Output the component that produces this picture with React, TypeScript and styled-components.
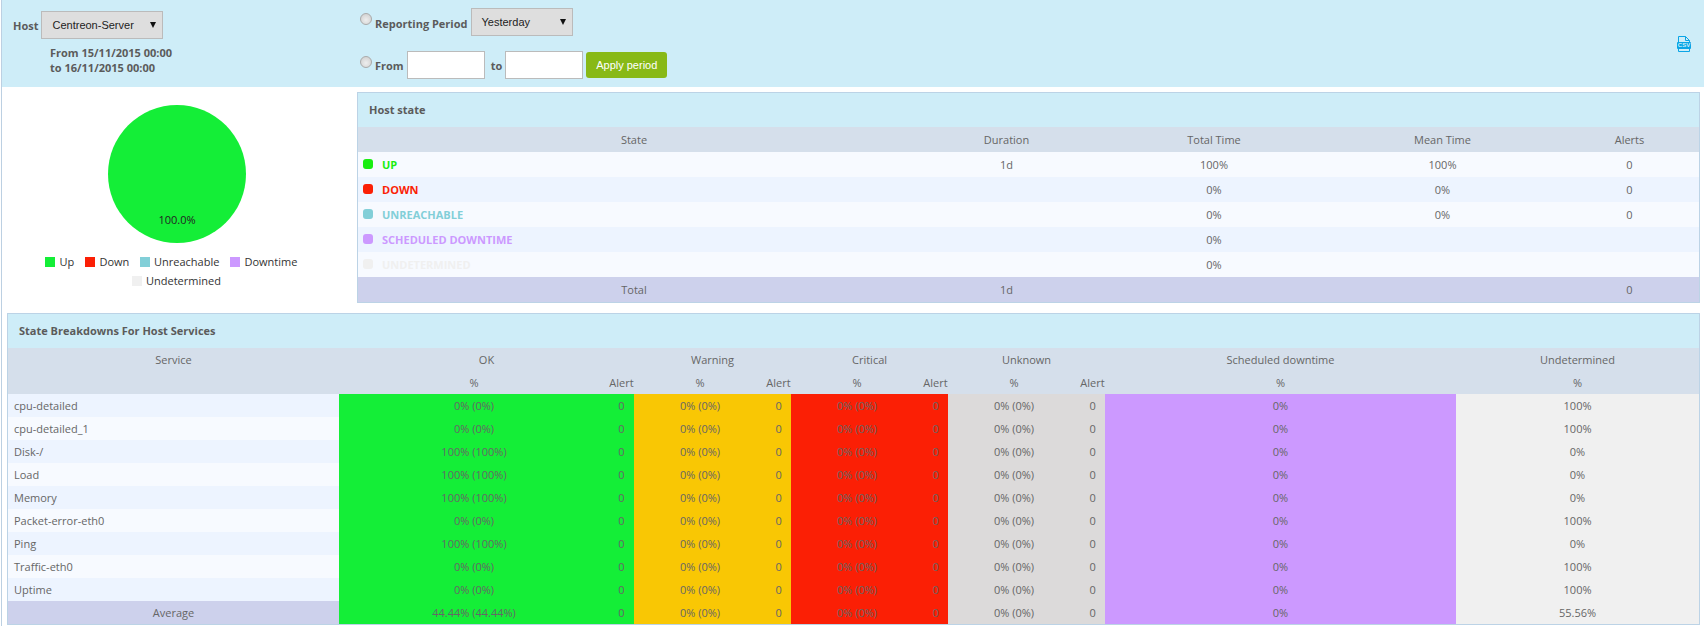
import React from "react";
import styled, { createGlobalStyle } from "styled-components";

const Global = createGlobalStyle`
  html, body { margin: 0; padding: 0; background: #fff; overflow: hidden; }
  body { font-family: "Open Sans", "Liberation Sans", sans-serif; font-size: 11px; color: #666; }
`;

const Page = styled.div`
  width: 1704px;
  height: 626px;
  box-sizing: border-box;
  padding-left: 1px;
  overflow: hidden;
`;
const Frame = styled.div`
  border-left: 1px solid #bcd0e2;
  height: 626px;
`;
const FilterBar = styled.div`
  display: flex;
  height: 87px;
  background: #ceedf8;
`;
const HostCol = styled.div`
  width: 358px;
  box-sizing: border-box;
  padding: 11px 0 0 11px;
`;
const HostRow = styled.div`
  display: flex;
  align-items: center;
  gap: 3px;
`;
const Label = styled.span`
  font-weight: 700;
  color: #5b5b5b;
  line-height: 15px;
`;
const SelectBox = styled.div<{ $width: number }>`
  width: ${(p) => p.$width}px;
  height: 28px;
  box-sizing: border-box;
  display: flex;
  align-items: center;
  justify-content: space-between;
  padding: 0 6px 0 10px;
  background: #dedede;
  border: 1px solid #bbb;
  font-family: "Liberation Sans", Arial, sans-serif;
  font-size: 11px;
  color: #222;
`;
const Arrow = styled.i`
  display: block;
  width: 0;
  height: 0;
  border-left: 3px solid transparent;
  border-right: 3px solid transparent;
  border-top: 6px solid #111;
`;
const DateRange = styled.div`
  margin: 6px 0 0 37px;
  display: flex;
  flex-direction: column;
`;
const PeriodCol = styled.div`
  flex: 1;
  padding-top: 8px;
`;
const PeriodRow = styled.div<{ $top?: number }>`
  display: flex;
  align-items: center;
  height: 28px;
  margin-top: ${(p) => p.$top ?? 0}px;
`;
const Radio = styled.input.attrs({ type: "radio" })`
  appearance: none;
  margin: -7px 3px 0 0;
  width: 12px;
  height: 12px;
  flex: none;
  border-radius: 50%;
  border: 1px solid #aaa;
  box-sizing: border-box;
  background: radial-gradient(circle at 50% 60%, #eee, #ccc);
`;
const PeriodLabel = styled(Label)<{ $after: number; $down?: number }>`
  margin-right: ${(p) => p.$after}px;
  margin-top: ${(p) => p.$down ?? 0}px;
`;
const DateInput = styled.input.attrs({ type: "text" })`
  width: 78px;
  height: 28px;
  box-sizing: border-box;
  padding: 0;
  background: #fff;
  border: 1px solid #bbb;
  margin-right: 6px;
  outline: none;
`;
const ApplyButton = styled.button`
  width: 81px;
  height: 26px;
  margin-left: -3px;
  padding: 0;
  border: 0;
  border-radius: 3px;
  background: #88b917;
  color: #fff;
  font-family: "Liberation Sans", Arial, sans-serif;
  font-size: 11px;
`;
const CsvLink = styled.a`
  display: block;
  margin: 36px 13px 0 0;
  width: 14px;
  height: 16px;
`;
const Upper = styled.div`
  display: flex;
  margin-top: 5px;
  padding-right: 4px;
`;
const ChartCol = styled.div`
  width: 355px;
  height: 211px;
  flex: none;
`;
const Panel = styled.div`
  box-sizing: border-box;
  border: 1px solid #bcd3e6;
  background: #fff;
`;
const HostPanel = styled(Panel)`
  flex: 1;
  height: 211px;
`;
const ServicePanel = styled(Panel)`
  margin: 10px 4px 0 5px;
  height: 312px;
`;
const PanelTitle = styled.div`
  height: 34px;
  line-height: 34px;
  padding-left: 11px;
  background: #ceedf8;
  font-weight: 700;
  color: #5b5b5b;
`;
const Table = styled.table`
  width: 100%;
  table-layout: fixed;
  border-collapse: collapse;
  border-spacing: 0;
`;
const Head = styled.th<{ $h: number }>`
  height: ${(p) => p.$h}px;
  padding: 0;
  font-weight: 400;
  text-align: center;
  background: #d5dfeb;
  color: #666;
  white-space: nowrap;
`;
const Row = styled.tr<{ $alt: boolean }>`
  background: ${(p) => (p.$alt ? "#edf4ff" : "#f7faff")};
`;
const FootRow = styled.tr`
  background: #cdd1ec;
`;
const Cell = styled.td<{ $h: number; $bg?: string }>`
  height: ${(p) => p.$h}px;
  padding: 0;
  text-align: center;
  color: #666;
  background: ${(p) => p.$bg ?? "transparent"};
  white-space: nowrap;
`;
const NameCell = styled.td`
  height: 23px;
  padding: 0 0 0 6px;
  color: #666;
  white-space: nowrap;
`;
const StateTag = styled.div<{ $color: string }>`
  display: flex;
  align-items: center;
  gap: 9px;
  padding-left: 5px;
  font-weight: 700;
  color: ${(p) => p.$color};
`;
const Dot = styled.i<{ $color: string }>`
  display: block;
  width: 10px;
  height: 10px;
  margin-top: -2px;
  border-radius: 3px;
  background: ${(p) => p.$color};
`;

const C = {
  up: "#19ee11",
  pie: "#14ee37",
  warn: "#f9c704",
  down: "#fb1f05",
  unreach: "#82cfd8",
  unknown: "#dcdada",
  sched: "#cc99ff",
  undet: "#f0f0f0",
};

const hostRows = [
  { name: "UP", color: C.up, dur: "1d", total: "100%", mean: "100%", alerts: "0" },
  { name: "DOWN", color: C.down, dur: "", total: "0%", mean: "0%", alerts: "0" },
  { name: "UNREACHABLE", color: C.unreach, dur: "", total: "0%", mean: "0%", alerts: "0" },
  { name: "SCHEDULED DOWNTIME", color: C.sched, dur: "", total: "0%", mean: "", alerts: "" },
  { name: "UNDETERMINED", color: C.undet, dur: "", total: "0%", mean: "", alerts: "" },
];

const services = [
  ["cpu-detailed", "0% (0%)", "100%"],
  ["cpu-detailed_1", "0% (0%)", "100%"],
  ["Disk-/", "100% (100%)", "0%"],
  ["Load", "100% (100%)", "0%"],
  ["Memory", "100% (100%)", "0%"],
  ["Packet-error-eth0", "0% (0%)", "100%"],
  ["Ping", "100% (100%)", "0%"],
  ["Traffic-eth0", "0% (0%)", "100%"],
  ["Uptime", "0% (0%)", "100%"],
];

const legend = [
  { x: 43, y: 165, tx: 57.5, c: C.pie, t: "Up" },
  { x: 83, y: 165, tx: 97.5, c: C.down, t: "Down" },
  { x: 138, y: 165, tx: 152, c: C.unreach, t: "Unreachable" },
  { x: 228, y: 165, tx: 242.5, c: C.sched, t: "Downtime" },
  { x: 130, y: 184, tx: 144, c: C.undet, t: "Undetermined" },
];

function CsvIcon() {
  return (
    <svg width="14" height="16" viewBox="0 0 14 16" fill="none">
      <path d="M1.5 6V.5H8.5L12.5 4.5V6M1.5 13v2.5h11V13" stroke="#0aa5e6" strokeWidth="1" />
      <path d="M8.5.5V4.5h4" stroke="#0aa5e6" strokeWidth="1" />
      <rect x="0" y="6" width="14" height="7" rx="1" fill="#0aa5e6" />
      <text x="7" y="11.4" textAnchor="middle" fontSize="6" fontWeight="700" fontFamily="Liberation Sans" fill="#ceedf8">
        CSV
      </text>
    </svg>
  );
}

function PieChart() {
  return (
    <svg width="355" height="211" viewBox="0 0 355 211">
      <circle cx="175" cy="82" r="69" fill={C.pie} />
      <text x="175" y="132" textAnchor="middle" fontSize="11" fontFamily="Open Sans" fill="#222">
        100.0%
      </text>
      {legend.map((l) => (
        <g key={l.t}>
          <rect x={l.x} y={l.y} width="10" height="10" fill={l.c} />
          <text x={l.tx} y={l.y + 9} fontSize="11" fontFamily="Open Sans" fill="#333">
            {l.t}
          </text>
        </g>
      ))}
    </svg>
  );
}

const statusBlocks = [C.warn, C.down, C.unknown];

export default function App() {
  return (
    <Page>
      <Global />
      <Frame>
        <FilterBar>
          <HostCol>
            <HostRow>
              <Label>Host</Label>
              <SelectBox $width={122}>
                <span>Centreon-Server</span>
                <Arrow />
              </SelectBox>
            </HostRow>
            <DateRange>
              <Label>From 15/11/2015 00:00</Label>
              <Label>to 16/11/2015 00:00</Label>
            </DateRange>
          </HostCol>
          <PeriodCol>
            <PeriodRow>
              <Radio name="period" />
              <PeriodLabel $after={3} $down={3}>Reporting Period</PeriodLabel>
              <SelectBox $width={102}>
                <span>Yesterday</span>
                <Arrow />
              </SelectBox>
            </PeriodRow>
            <PeriodRow $top={15}>
              <Radio name="period" />
              <PeriodLabel $after={3}>From</PeriodLabel>
              <DateInput />
              <PeriodLabel $after={3}>to</PeriodLabel>
              <DateInput />
              <ApplyButton>Apply period</ApplyButton>
            </PeriodRow>
          </PeriodCol>
          <CsvLink>
            <CsvIcon />
          </CsvLink>
        </FilterBar>

        <Upper>
          <ChartCol>
            <PieChart />
          </ChartCol>
          <HostPanel>
            <PanelTitle>Host state</PanelTitle>
            <Table>
              <colgroup>
                <col width="552" />
                <col width="193" />
                <col width="222" />
                <col width="235" />
                <col width="139" />
              </colgroup>
              <thead>
                <tr>
                  <Head $h={25}>State</Head>
                  <Head $h={25}>Duration</Head>
                  <Head $h={25}>Total Time</Head>
                  <Head $h={25}>Mean Time</Head>
                  <Head $h={25}>Alerts</Head>
                </tr>
              </thead>
              <tbody>
                {hostRows.map((r, i) => (
                  <Row key={r.name} $alt={i % 2 === 1}>
                    <Cell $h={25}>
                      <StateTag $color={r.color}>
                        <Dot $color={r.color} />
                        {r.name}
                      </StateTag>
                    </Cell>
                    <Cell $h={25}>{r.dur}</Cell>
                    <Cell $h={25}>{r.total}</Cell>
                    <Cell $h={25}>{r.mean}</Cell>
                    <Cell $h={25}>{r.alerts}</Cell>
                  </Row>
                ))}
                <FootRow>
                  <Cell $h={25}>Total</Cell>
                  <Cell $h={25}>1d</Cell>
                  <Cell $h={25} />
                  <Cell $h={25} />
                  <Cell $h={25}>0</Cell>
                </FootRow>
              </tbody>
            </Table>
          </HostPanel>
        </Upper>

        <ServicePanel>
          <PanelTitle>State Breakdowns For Host Services</PanelTitle>
          <Table>
            <colgroup>
              <col width="331" />
              <col width="270" />
              <col width="25" />
              <col width="132" />
              <col width="25" />
              <col width="132" />
              <col width="25" />
              <col width="132" />
              <col width="25" />
              <col width="351" />
              <col width="243" />
            </colgroup>
            <thead>
              <tr>
                <Head $h={23}>Service</Head>
                <Head $h={23} colSpan={2}>OK</Head>
                <Head $h={23} colSpan={2}>Warning</Head>
                <Head $h={23} colSpan={2}>Critical</Head>
                <Head $h={23} colSpan={2}>Unknown</Head>
                <Head $h={23}>Scheduled downtime</Head>
                <Head $h={23}>Undetermined</Head>
              </tr>
              <tr>
                <Head $h={23} />
                <Head $h={23}>%</Head>
                <Head $h={23}>Alert</Head>
                <Head $h={23}>%</Head>
                <Head $h={23}>Alert</Head>
                <Head $h={23}>%</Head>
                <Head $h={23}>Alert</Head>
                <Head $h={23}>%</Head>
                <Head $h={23}>Alert</Head>
                <Head $h={23}>%</Head>
                <Head $h={23}>%</Head>
              </tr>
            </thead>
            <tbody>
              {services.map(([name, ok, und], i) => (
                <Row key={name} $alt={i % 2 === 0}>
                  <NameCell>{name}</NameCell>
                  <Cell $h={23} $bg={C.pie}>{ok}</Cell>
                  <Cell $h={23} $bg={C.pie}>0</Cell>
                  {statusBlocks.flatMap((bg) => [
                    <Cell key={bg + "p"} $h={23} $bg={bg}>0% (0%)</Cell>,
                    <Cell key={bg + "a"} $h={23} $bg={bg}>0</Cell>,
                  ])}
                  <Cell $h={23} $bg={C.sched}>0%</Cell>
                  <Cell $h={23} $bg={C.undet}>{und}</Cell>
                </Row>
              ))}
              <FootRow>
                <Cell $h={23}>Average</Cell>
                <Cell $h={23} $bg={C.pie}>44.44% (44.44%)</Cell>
                <Cell $h={23} $bg={C.pie}>0</Cell>
                {statusBlocks.flatMap((bg) => [
                  <Cell key={bg + "p"} $h={23} $bg={bg}>0% (0%)</Cell>,
                  <Cell key={bg + "a"} $h={23} $bg={bg}>0</Cell>,
                ])}
                <Cell $h={23} $bg={C.sched}>0%</Cell>
                <Cell $h={23} $bg={C.undet}>55.56%</Cell>
              </FootRow>
            </tbody>
          </Table>
        </ServicePanel>
      </Frame>
    </Page>
  );
}
